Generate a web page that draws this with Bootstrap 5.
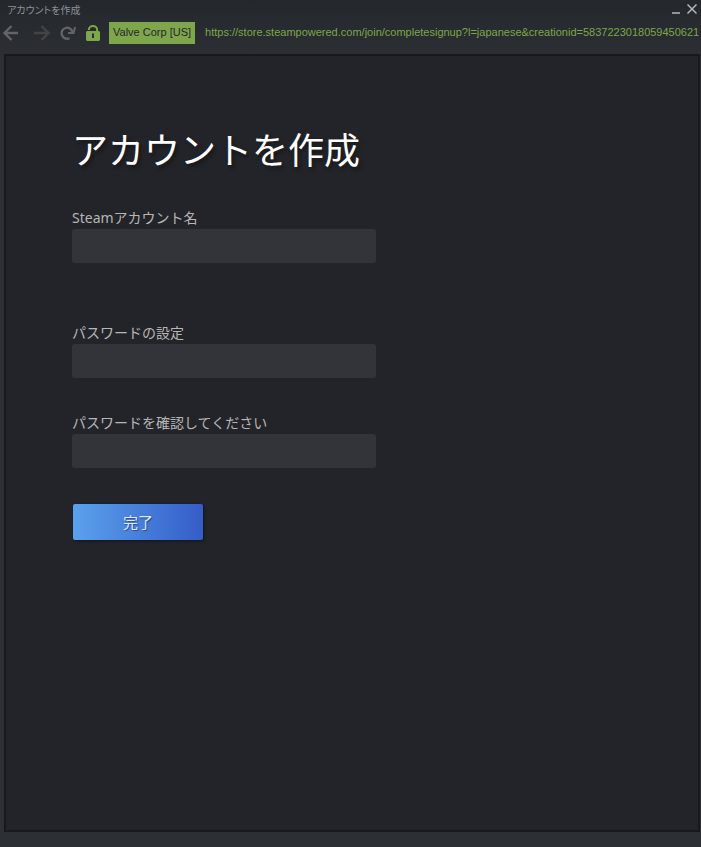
<!DOCTYPE html>
<html lang="ja">
<head>
<meta charset="utf-8">
<meta name="viewport" content="width=device-width, initial-scale=1">
<title>アカウントを作成</title>
<link href="https://cdn.jsdelivr.net/npm/bootstrap@5.3.0/dist/css/bootstrap.min.css" rel="stylesheet">
<style>
  body {
    background: linear-gradient(#24272b 0, #2c3034 60px, #2c3034 100%);
    color: #b8b6b4;
    font-family: "Noto Sans", "Noto Sans CJK JP", sans-serif;
    font-size: 14px;
    line-height: 20px;
  }
  .title-bar { height: 20px; padding: 0 3px 0 7px; }
  .window-title {
    color: #8b929a;
    font-family: "Noto Sans CJK JP", sans-serif;
    font-size: 10px;
    font-feature-settings: "palt";
    line-height: 20px;
  }
  .icon-btn { line-height: 0; color: #626466; }
  .icon-btn:disabled { opacity: 1; border: 0; color: #434446; }
  .window-btn { color: #b4b6b8; }
  .address-bar {
    height: 34px;
    padding: 2px 1px 10px 3px;
    font-family: "Liberation Sans", Arial, sans-serif;
    font-size: 11px;
    line-height: 18px;
  }
  .nav-group { gap: 15px; }
  .nav-tail { gap: 10px; margin-left: 10px; }
  .site-lock { color: #7ea64b; }
  .owner {
    background: #7ea64b;
    color: #24272b;
    padding: 0 4px 2px;
    line-height: 20px;
    margin: 0 10px 0 9px;
  }
  .url { color: #7ea64b; padding-bottom: 2px; }
  .page {
    background: #232429;
    border: 2px solid #18191c;
    margin: 0 1px 15px 4px;
    padding: 70px 66px 0;
  }
  .page-title {
    color: #fff;
    font-family: "Noto Sans CJK JP", sans-serif;
    font-size: 36px;
    font-weight: 400;
    line-height: 44px;
    margin-bottom: 38px;
    text-shadow: 2px 3px 4px rgba(0, 0, 0, .4);
  }
  .signup-form { max-width: 304px; }
  .field-label { line-height: 20px; padding-bottom: 1px; }
  .field {
    height: 34px;
    background: #333439;
    color: #fff;
    border: 0;
    border-radius: 3px;
    font-size: 14px;
  }
  .field:focus { background: #393a40; color: #fff; }
  .field-gap { margin-bottom: 60px; }
  .field-gap-sm { margin-bottom: 35px; }
  .submit-btn {
    width: 130px;
    height: 36px;
    margin: 1px;
    border: 0;
    border-radius: 2px;
    background: linear-gradient(90deg, #5ba1ec, #345dc8);
    color: #dfe8f6;
    font-size: 15px;
    line-height: 34px;
    text-shadow: 1px 1px 1px rgba(0, 0, 0, .4);
    box-shadow: 1px 1px 3px rgba(0, 0, 0, .45);
  }
</style>
</head>
<body class="d-flex flex-column min-vh-100">
  <header>
    <div class="title-bar d-flex justify-content-between align-items-center">
      <span class="window-title">アカウントを作成</span>
      <div class="d-flex gap-1">
        <button type="button" class="icon-btn window-btn bg-transparent border-0 p-0" aria-label="最小化">
          <svg width="10" height="12" viewBox="0 0 10 12" fill="none" stroke="currentColor" stroke-width="1.5"><path d="M0 9h8"/></svg>
        </button>
        <button type="button" class="icon-btn window-btn bg-transparent border-0 p-0" aria-label="閉じる">
          <svg width="12" height="12" viewBox="0 0 12 12" fill="none" stroke="currentColor" stroke-width="1.5"><path d="M1.500 0.500l9 9M10.500 0.500l-9 9"/></svg>
        </button>
      </div>
    </div>
    <div class="address-bar d-flex align-items-center">
      <div class="nav-group d-flex flex-shrink-0">
        <button type="button" class="icon-btn bg-transparent border-0 p-0" aria-label="戻る">
          <svg width="16" height="16" viewBox="0 0 16 16" fill="none" stroke="currentColor" stroke-width="2.300"><path d="M15 8H2M8.500 1L1.500 8l7 7"/></svg>
        </button>
        <button type="button" class="icon-btn bg-transparent border-0 p-0" aria-label="進む" disabled>
          <svg width="16" height="16" viewBox="0 0 16 16" fill="none" stroke="currentColor" stroke-width="2.300"><path d="M0 8h14M7.500 1l7 7-7 7"/></svg>
        </button>
      </div>
      <div class="nav-tail d-flex flex-shrink-0">
        <button type="button" class="icon-btn bg-transparent border-0 p-0" aria-label="再読み込み">
          <svg width="16" height="16" viewBox="0 0 16 16" fill="none" stroke="currentColor" stroke-width="2.300"><path d="M9.500 13.200A5.500 5.500 0 1 1 12.500 7"/><path d="M8 8h5.500L15.200 2" stroke-width="2"/></svg>
        </button>
        <svg class="site-lock" width="14" height="16" viewBox="0 0 14 16" role="img" aria-label="保護された接続"><path d="M2.900 5V4.500a4.100 3.500 0 0 1 8.200 0V6.500" fill="none" stroke="currentColor" stroke-width="2"/><path fill="currentColor" fill-rule="evenodd" d="M1 6h12l1 1v8l-1 1H1l-1-1V7zM6 8.500v4.500h2V8.500z"/></svg>
      </div>
      <span class="owner text-nowrap flex-shrink-0">Valve Corp [US]</span>
      <span class="url text-nowrap overflow-hidden">https://store.steampowered.com/join/completesignup?l=japanese&amp;creationid=5837223018059450621</span>
    </div>
  </header>

  <main class="page flex-grow-1">
    <h1 class="page-title">アカウントを作成</h1>
    <form class="signup-form">
      <div class="field-gap">
        <label class="field-label d-block" for="account">Steamアカウント名</label>
        <input class="field form-control" type="text" id="account" autocomplete="username">
      </div>
      <div class="field-gap-sm">
        <label class="field-label d-block" for="password">パスワードの設定</label>
        <input class="field form-control" type="password" id="password" autocomplete="new-password">
      </div>
      <div class="field-gap-sm">
        <label class="field-label d-block" for="confirm">パスワードを確認してください</label>
        <input class="field form-control" type="password" id="confirm" autocomplete="new-password">
      </div>
      <button type="submit" class="submit-btn btn p-0">完了</button>
    </form>
  </main>
<script src="https://cdn.jsdelivr.net/npm/bootstrap@5.3.0/dist/js/bootstrap.bundle.min.js"></script>
</body>
</html>
